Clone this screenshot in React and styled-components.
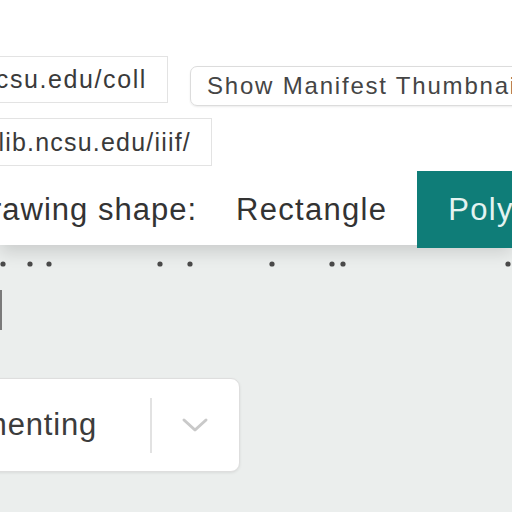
import React from 'react';
import styled, { createGlobalStyle } from 'styled-components';

const GlobalStyle = createGlobalStyle`
  body {
    margin: 0;
    background: #ebeeed;
    font-family: "Liberation Sans", Arial, sans-serif;
    overflow: hidden;
  }
`;

const OFFSET = 300;

function App() {
  return (
    <Page>
      <GlobalStyle />
      <Header>
        <Shift>
          <Row>
            <UrlBox $right={168} $height={47} $spacing={1.6}>https://d.lib.ncsu.edu/coll</UrlBox>
            <ThumbButton>Show Manifest Thumbnails</ThumbButton>
          </Row>
          <Row $gap={12}>
            <UrlBox $right={212} $height={48} $spacing={1.2}>https://iiif.lib.ncsu.edu/iiif/</UrlBox>
          </Row>
          <ShapeRow>
            <ShapeLabel>Drawing shape:</ShapeLabel>
            <ShapeTab>Rectangle</ShapeTab>
            <ShapeTab $active>Polygon</ShapeTab>
          </ShapeRow>
        </Shift>
      </Header>
      <Peek>
        <svg width="512" height="8" viewBox="0 0 512 8">
          {[3, 30, 49, 160, 190, 272, 332, 343, 508].map((x) => (
            <circle key={x} cx={x} cy="4" r="2.6" fill="#4a4a4a" />
          ))}
        </svg>
      </Peek>
      <Body>
        <Shift>
          <EdgeMark />
          <Select>
            <SelectValue>Commenting</SelectValue>
            <Divider />
            <Chevron viewBox="0 0 28 18">
              <path d="M3 4 L14 14 L25 4" />
            </Chevron>
          </Select>
        </Shift>
      </Body>
    </Page>
  );
}

const Page = styled.div`
  width: 512px;
  height: 512px;
  overflow: hidden;
  position: relative;
  background: #ebeeed;
`;

const Header = styled.div`
  position: relative;
  z-index: 2;
  height: 245px;
  padding-top: 56px;
  box-sizing: border-box;
  background: #ffffff;
  box-shadow: 0 7px 16px rgba(0, 0, 0, 0.14);
`;

const Shift = styled.div`
  margin-left: -${OFFSET}px;
`;

const Row = styled.div`
  display: flex;
  align-items: flex-start;
  margin-top: ${(p) => p.$gap || 0}px;
`;

const UrlBox = styled.div`
  flex-shrink: 0;
  width: ${(p) => p.$right + OFFSET}px;
  height: ${(p) => p.$height}px;
  box-sizing: border-box;
  border: 1px solid #e3e3e3;
  display: flex;
  align-items: center;
  justify-content: flex-end;
  padding-right: 20px;
  overflow: hidden;
  white-space: nowrap;
  font-size: 25px;
  letter-spacing: ${(p) => p.$spacing}px;
  color: #3a3a3a;
`;

const ThumbButton = styled.div`
  flex-shrink: 0;
  margin-left: 22px;
  margin-top: 10px;
  height: 40px;
  box-sizing: border-box;
  padding: 0 16px;
  display: flex;
  align-items: center;
  border: 1px solid #dcdcdc;
  border-radius: 7px;
  white-space: nowrap;
  font-size: 24px;
  letter-spacing: 1.8px;
  color: #454545;
  box-shadow: 0 1px 2px rgba(0, 0, 0, 0.08);
`;

const ShapeRow = styled.div`
  display: flex;
  align-items: stretch;
  height: 77px;
  margin-top: 5px;
`;

const ShapeLabel = styled.div`
  flex-shrink: 0;
  width: ${197 + OFFSET}px;
  display: flex;
  align-items: center;
  justify-content: flex-end;
  white-space: nowrap;
  font-size: 31px;
  letter-spacing: 1px;
  color: #333;
`;

const ShapeTab = styled.div`
  flex-shrink: 0;
  display: flex;
  align-items: center;
  margin-left: ${(p) => (p.$active ? 0 : 8)}px;
  padding: 0 30px 0 31px;
  white-space: nowrap;
  font-size: 31px;
  letter-spacing: 1.3px;
  color: ${(p) => (p.$active ? '#e4f3f1' : '#333')};
  background: ${(p) => (p.$active ? '#0f7d78' : 'transparent')};
`;

const Peek = styled.div`
  position: absolute;
  top: 260px;
  left: 0;
  z-index: 1;
  line-height: 0;
`;

const Body = styled.div`
  padding-top: 45px;
`;

const EdgeMark = styled.div`
  width: ${OFFSET + 2}px;
  height: 40px;
  border-right: 2px solid #7a7a7a;
  box-sizing: border-box;
`;

const Select = styled.div`
  margin-top: 48px;
  width: ${240 + OFFSET}px;
  height: 94px;
  box-sizing: border-box;
  display: flex;
  align-items: center;
  justify-content: flex-end;
  background: #ffffff;
  border: 1px solid #dedede;
  border-radius: 9px;
  box-shadow: 0 1px 3px rgba(0, 0, 0, 0.08);
  overflow: hidden;
`;

const SelectValue = styled.div`
  white-space: nowrap;
  font-size: 31px;
  letter-spacing: 0.8px;
  color: #3c3c3c;
  margin-right: 53px;
`;

const Divider = styled.div`
  flex-shrink: 0;
  width: 2px;
  height: 55px;
  background: #e2e2e2;
`;

const Chevron = styled.svg`
  flex-shrink: 0;
  width: 28px;
  height: 18px;
  margin: 0 30px 0 29px;
  fill: none;
  stroke: #c9c9c9;
  stroke-width: 3;
  stroke-linecap: round;
  stroke-linejoin: round;
`;

export default App;
